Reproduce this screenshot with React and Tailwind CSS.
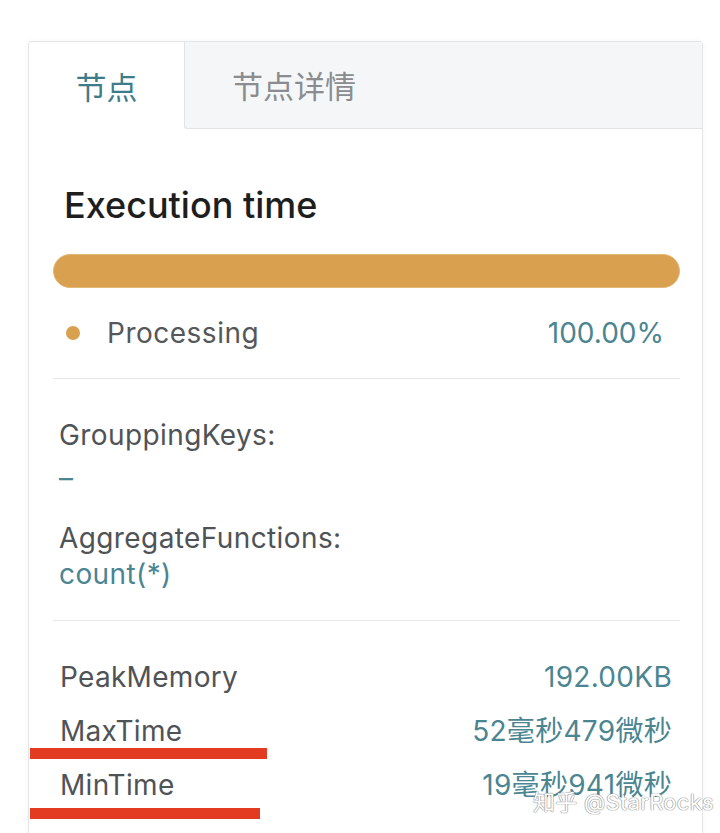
import React from "react";

const font = { fontFamily: '"Inter", "Liberation Sans", "Noto Sans CJK SC", sans-serif' };

const stats = [
  { label: "PeakMemory", value: "192.00KB" },
  { label: "MaxTime", value: "52毫秒479微秒" },
  { label: "MinTime", value: "19毫秒941微秒" },
];

const App = () => {
  return (
    <div
      className="relative h-[833px] w-[720px] overflow-hidden bg-white"
      style={font}
    >
      {/* Card */}
      <div className="ml-[28px] mt-[41px] w-[675px] rounded-t-[3px] border border-[#e4e5e7] bg-white shadow-[0_0_6px_rgba(0,0,0,0.04)]">
        {/* Tabs */}
        <div className="flex h-[87px]">
          <div className="flex w-[155px] items-center justify-center pt-[5px] text-[31px] text-[#3f7c89]">
            节点
          </div>
          <div className="flex flex-1 items-center rounded-bl-[3px] border-b border-l border-[#e2e3e5] bg-[#f5f6f8] pl-[47px] pt-[5px] text-[31px] text-[#8a8c8f]">
            节点详情
          </div>
        </div>

        {/* Body */}
        <div className="pl-[24px] pr-[22px] pt-[56px]">
          <h2 className="pl-[11px] text-[36px] font-medium leading-[40px] text-[#1e1e1e]">
            Execution time
          </h2>

          <div className="mt-[29px] h-[34px] rounded-full border border-[#e2b877] bg-[#d9a04f]" />

          <div className="mt-[27px] flex items-center justify-between pl-[13px] pr-[16px] text-[28px] leading-[36px]">
            <div className="flex items-center gap-[27px]">
              <span className="h-[14px] w-[14px] rounded-full bg-[#d9a04f]" />
              <span className="tracking-[0.5px] text-[#555759]">Processing</span>
            </div>
            <span className="text-[#4a8591]">100.00%</span>
          </div>

          <div className="mt-[27px] h-px bg-[#e6e7e9]" />

          <div className="flex flex-col pl-[6px] pt-[38px] text-[28px] leading-[36px] tracking-[0.4px]">
            <div className="text-[#505356]">GrouppingKeys:</div>
            <div className="mt-[7px] text-[#4a8591]">–</div>
            <div className="mt-[24px] text-[#505356]">AggregateFunctions:</div>
            <div className="text-[#4a8591]">count(*)</div>
          </div>

          <div className="mt-[28px] h-px bg-[#e6e7e9]" />

          <div className="flex flex-col gap-[18px] pl-[7px] pr-[8px] pt-[38px] text-[28px] leading-[36px] tracking-[0.3px]">
            {stats.map((s) => (
              <div key={s.label} className="flex items-center justify-between">
                <span className="text-[#505356]">{s.label}</span>
                <span className="text-[#4a8591]">{s.value}</span>
              </div>
            ))}
          </div>
          <div className="h-[60px]" />
        </div>
      </div>

      {/* Annotation underlines */}
      <div className="absolute left-[30px] top-[748px] h-[11px] w-[237px] bg-[#e23b22]" />
      <div className="absolute left-[30px] top-[808px] h-[11px] w-[230px] bg-[#e23b22]" />

      {/* Watermark */}
      <div className="absolute left-[533px] top-[788px] whitespace-nowrap text-[22px] leading-[28px] tracking-[0.3px] text-white [text-shadow:0_0_1px_#8a8a8a,0_0_1px_#8a8a8a,0_0_1px_#8a8a8a]">
        知乎 @StarRocks
      </div>
    </div>
  );
};

export default App;
